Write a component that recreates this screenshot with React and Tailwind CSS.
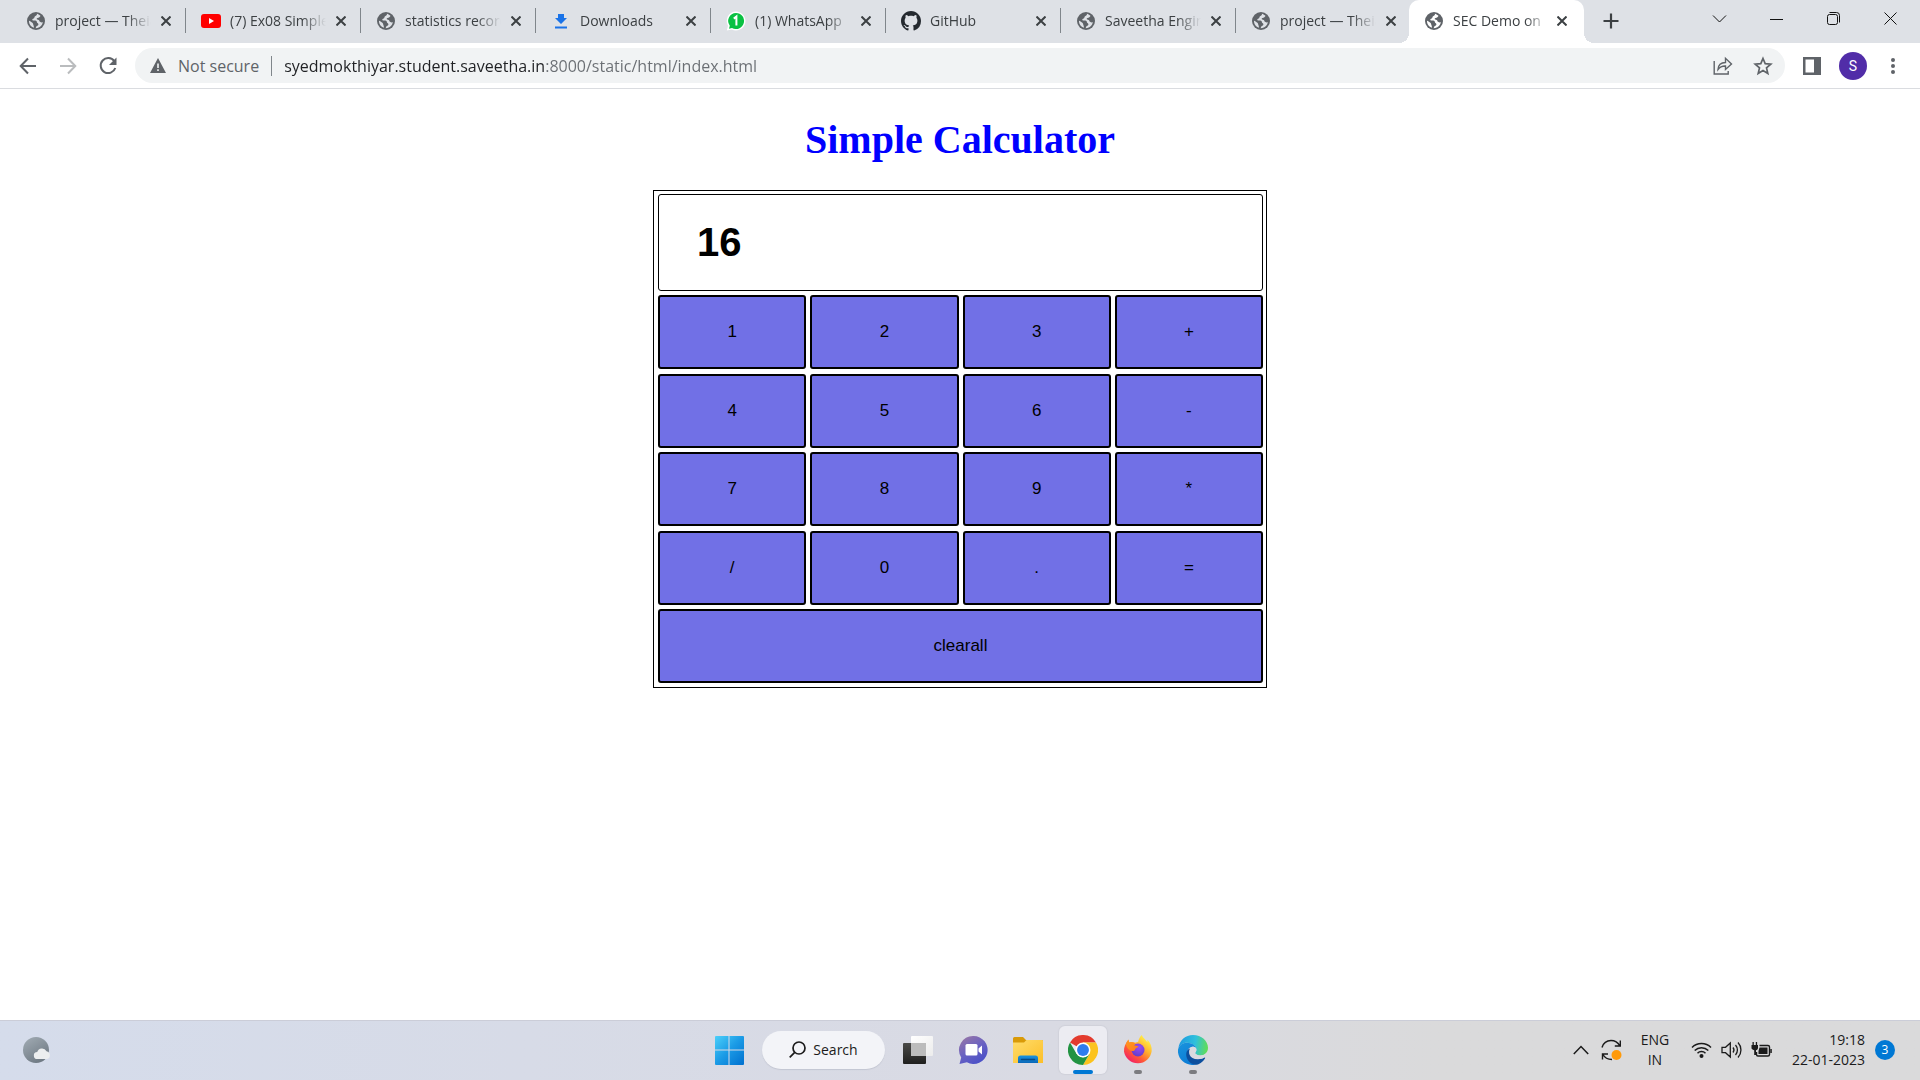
import { useState } from "react";

const Globe = ({ active }) => (
  <svg width="18" height="18" viewBox="0 0 18 18" className="shrink-0" aria-hidden="true">
    <circle cx="9" cy="9" r="9" fill="#5f6368" />
    <g fill={active ? "#fff" : "#dee1e6"}>
      <path d="M9.8 1.8c.6 1-.3 1.800-1.300 2.300-.9.4-.9 1.200-1.300 1.900-.5.9-2 .7-2 1.700 0 1 1.700.8 3 .9 1.500.1 1.600 1.200 1.800 2 .3.8 1.500.7 1.400 1.900-.1 1.200-1.700 1.200-2.200 2.200-.2.500-.4 1-.6 1.500l1.700-.1c3-.7 5-2.900 5.600-5.800-.9.200-2 .2-2.900-.500-.8-.6-.4-1.500-1.300-1.900-.9-.3-2-.1-2-1.100 0-1.200 1.600-1 2.400-1.400.7-.3.9-1 1.500-1.400C12.700 3 11.300 2.200 9.800 1.800Z" />
      <path d="M2 8.800c1.300.2 1.900 1.200 3 1.700 1 .5 1.100 1.400 1.300 2.300.2.900.7 1.300.6 2.900C4 14.800 1.900 12.200 2 8.800Z" />
    </g>
  </svg>
);

const YouTube = () => (
  <svg width="20" height="20" viewBox="0 0 20 20" className="shrink-0" aria-hidden="true">
    <rect y="3" width="20" height="14" rx="3" fill="#f00" />
    <path d="M8 7v6l5-3z" fill="#fff" />
  </svg>
);

const Download = () => (
  <svg width="20" height="20" viewBox="0 0 20 20" className="shrink-0" aria-hidden="true">
    <path d="M7 3h6v4h3l-6 6-6-6h3zM4 15.500h12v2H4z" fill="#1a73e8" />
  </svg>
);

const WhatsApp = () => (
  <svg width="20" height="20" viewBox="0 0 20 20" className="shrink-0" aria-hidden="true">
    <path d="M10 .5a9.500 9.500 0 1 1-4.300 18L.8 19.600l1.200-4.800A9.500 9.500 0 0 1 10 .5Z" fill="#fff" />
    <path d="M10 2a8 8 0 1 1-4 14.900l-3 .800.800-2.900A8 8 0 0 1 10 2Z" fill="#0ac143" />
    <path d="M7.800 7.600 10.400 5.600v9" fill="none" stroke="#fff" strokeWidth="2" />
  </svg>
);

const GitHub = () => (
  <svg width="20" height="20" viewBox="0 0 16 16" className="shrink-0" aria-hidden="true">
    <path
      fill="#24292f"
      d="M8 0C3.580 0 0 3.580 0 8c0 3.540 2.290 6.530 5.470 7.590.4.070.55-.17.55-.38 0-.19-.01-.82-.01-1.490-2.010.37-2.530-.49-2.690-.94-.09-.23-.48-.94-.82-1.130-.28-.15-.68-.52-.01-.53.63-.01 1.080.58 1.230.82.72 1.210 1.870.87 2.330.66.07-.52.28-.87.51-1.070-1.780-.2-3.640-.89-3.640-3.950 0-.87.31-1.590.82-2.150-.08-.2-.36-1.020.08-2.120 0 0 .67-.21 2.200.82.64-.18 1.320-.27 2-.27s1.360.09 2 .27c1.530-1.040 2.200-.82 2.200-.82.44 1.100.16 1.920.08 2.120.51.56.82 1.270.82 2.150 0 3.070-1.870 3.750-3.650 3.950.29.25.54.73.54 1.480 0 1.070-.01 1.930-.01 2.200 0 .21.15.46.55.38A8.010 8.010 0 0 0 16 8c0-4.420-3.580-8-8-8Z"
    />
  </svg>
);

const TABS = [
  { title: "project — Theia", icon: Globe },
  { title: "(7) Ex08 Simple Calculator", icon: YouTube },
  { title: "statistics record", icon: Globe },
  { title: "Downloads", icon: Download },
  { title: "(1) WhatsApp", icon: WhatsApp },
  { title: "GitHub", icon: GitHub },
  { title: "Saveetha Engineering", icon: Globe },
  { title: "project — Theia", icon: Globe },
  { title: "SEC Demo on", icon: Globe, active: true },
];

function Tab({ title, icon: Icon, active, first }) {
  return (
    <div
      className={
        active
          ? "relative -ml-px flex h-full w-[175px] items-center rounded-t-[10px] bg-white pr-3 pb-0.5 pl-[15px]"
          : "flex h-full w-[175px] items-center pr-[9px] pb-0.5 pl-4"
      }
    >
      {active && (
        <>
          <span className="absolute bottom-0 -left-2.5 size-2.5 bg-[radial-gradient(circle_at_0_0,transparent_10px,white_10px)]" />
          <span className="absolute -right-2.5 bottom-0 size-2.5 bg-[radial-gradient(circle_at_100%_0,transparent_10px,white_10px)]" />
        </>
      )}
      {!active && !first && <span className="-ml-4 mr-[15px] h-[25px] w-px shrink-0 bg-[#80868b]" />}
      <button type="button" className="flex min-w-0 flex-1 items-center overflow-hidden text-left">
        <span className="flex w-5 shrink-0 justify-center">
          <Icon active={active} />
        </span>
        <span className="ml-[9px] w-24 overflow-hidden whitespace-nowrap mask-r-from-75% text-sm text-[#3c4043]">
          {title}
        </span>
      </button>
      <button type="button" aria-label={`Close ${title}`} className="flex size-5 shrink-0 items-center justify-center">
        <svg width="10" height="10" viewBox="0 0 10 10">
          <path d="m.5.5 9 9m0-9-9 9" stroke="#3c4043" strokeWidth="2" />
        </svg>
      </button>
    </div>
  );
}

function WindowButton({ label, children }) {
  return (
    <button type="button" aria-label={label} className="flex h-9 w-[57px] items-center justify-center">
      <svg width="15" height="15" viewBox="0 0 15 15" fill="none" stroke="#111" strokeWidth="1">
        {children}
      </svg>
    </button>
  );
}

function TabStrip() {
  return (
    <div className="flex h-[43px] bg-[#dee1e6] pr-px pl-2.5">
      {TABS.map((t, i) => (
        <Tab key={i} {...t} first={i === 0} />
      ))}
      <button type="button" aria-label="New tab" className="ml-[15px] flex w-6 items-center justify-center pb-0.5">
        <svg width="16" height="16" viewBox="0 0 16 16">
          <path d="M8 .5v15M.5 8h15" stroke="#3c4043" strokeWidth="2.200" />
        </svg>
      </button>
      <div className="ml-auto flex">
        <WindowButton label="Search tabs">
          <path d="m1 4.500 6.500 6.500L14 4.500" />
        </WindowButton>
        <WindowButton label="Minimize">
          <path d="M1 8.500h13" />
        </WindowButton>
        <WindowButton label="Restore">
          <rect x="1.500" y="3.500" width="10" height="10" rx="2" />
          <path d="M3.500 1.500h7a3 3 0 0 1 3 3v7" />
        </WindowButton>
        <WindowButton label="Close window">
          <path d="m1.500 1.500 12 12m0-12-12 12" />
        </WindowButton>
      </div>
    </div>
  );
}

function Toolbar() {
  return (
    <div className="flex h-[46px] items-center border-b border-[#dadce0] bg-white pr-[17px] pl-4">
      <button type="button" aria-label="Back" className="flex w-6 justify-center">
        <svg width="20" height="20" viewBox="0 0 20 20" fill="none" stroke="#5f6368" strokeWidth="2">
          <path d="M18 10H3.500M10 2.500 2.700 10l7.300 7.500" />
        </svg>
      </button>
      <button type="button" aria-label="Forward" className="ml-4 flex w-6 justify-center">
        <svg width="20" height="20" viewBox="0 0 20 20" fill="none" stroke="#babcbe" strokeWidth="2">
          <path d="M2 10h14.500M10 2.500l7.300 7.500-7.300 7.500" />
        </svg>
      </button>
      <button type="button" aria-label="Reload" className="ml-4 flex w-6 justify-center">
        <svg width="20" height="20" viewBox="0 0 20 20">
          <path d="M16.300 5.200A7.500 7.500 0 1 0 17.300 12" fill="none" stroke="#5f6368" strokeWidth="2" />
          <path d="M18.500 1.500V9H11z" fill="#5f6368" />
        </svg>
      </button>
      <div className="ml-[15px] flex h-[35px] flex-1 items-center rounded-full bg-[#f1f3f4] pr-3 pl-[15px]">
        <button type="button" className="flex items-center text-base text-[#5f6368]">
          <svg width="16" height="15" viewBox="0 0 16 15" className="mr-3" aria-hidden="true">
            <path d="M8 0l8 15H0z" fill="#5f6368" />
            <path d="M7.200 5.500h1.600v4.500H7.200zM7.200 11.300h1.600v1.700H7.200z" fill="#f1f3f4" />
          </svg>
          Not secure
        </button>
        <span className="mx-3 h-5 w-px bg-[#80868b]" />
        <input
          type="text"
          aria-label="Address"
          defaultValue="syedmokthiyar.student.saveetha.in:8000/static/html/index.html"
          className="h-full min-w-0 flex-1 bg-[linear-gradient(90deg,#202124_261px,#6a6e73_261px)] bg-clip-text text-base text-transparent outline-none"
        />
        <button type="button" aria-label="Share this page">
          <svg width="20" height="20" viewBox="0 0 20 20" fill="none" stroke="#5f6368" strokeWidth="1.400">
            <path d="M1.200 5v13h14v-3M5 13.500c.3-5 3-7 7.500-7V2.300L18.500 8l-6 5.500V10c-3.500-.2-5.500.8-7.500 3.500Z" />
          </svg>
        </button>
        <button type="button" aria-label="Bookmark this tab" className="ml-5">
          <svg width="20" height="20" viewBox="0 0 20 20" fill="none" stroke="#5f6368" strokeWidth="1.700">
            <path d="m10 2.500 2.200 5.200 5.600.5-4.300 3.700 1.300 5.500-4.800-2.900-4.800 2.900 1.300-5.500L2.200 8.200l5.600-.5z" />
          </svg>
        </button>
      </div>
      <button type="button" aria-label="Side panel" className="ml-[18px]">
        <svg width="18" height="18" viewBox="0 0 18 18">
          <path d="M0 0h18v18H0zM2.500 2.500v13H11v-13z" fill="#5f6368" fillRule="evenodd" />
        </svg>
      </button>
      <button
        type="button"
        aria-label="Profile"
        className="ml-[18px] flex size-7 items-center justify-center rounded-full bg-[#512da8] font-['Roboto',sans-serif] text-sm text-white"
      >
        S
      </button>
      <button type="button" aria-label="Menu" className="ml-4 flex w-5 justify-center">
        <svg width="4" height="16" viewBox="0 0 4 16" fill="#5f6368">
          <circle cx="2" cy="2" r="2" />
          <circle cx="2" cy="8" r="2" />
          <circle cx="2" cy="14" r="2" />
        </svg>
      </button>
    </div>
  );
}

const KEYS = ["1", "2", "3", "+", "4", "5", "6", "-", "7", "8", "9", "*", "/", "0", ".", "="];

function Key({ label, wide, onPress }) {
  return (
    <button
      type="button"
      onClick={() => onPress(label)}
      className={
        wide
          ? "col-span-4 h-[74px] rounded-[3px] border-2 border-black bg-[#7170e6] text-[17px] text-black"
          : "h-[74px] rounded-[3px] border-2 border-black bg-[#7170e6] text-[17px] text-black"
      }
    >
      {label}
    </button>
  );
}

function Calculator() {
  const [value, setValue] = useState("16");

  const press = (key) => {
    if (key === "clearall") return setValue("");
    if (key !== "=") return setValue(value + key);
    try {
      setValue(String(Function(`return (${value || 0})`)()));
    } catch {
      setValue("Error");
    }
  };

  return (
    <main className="flex flex-1 flex-col items-center bg-white pt-7">
      <h1 className="font-['Liberation_Serif',serif] text-[40px] leading-[46px] font-bold text-[#00f]">
        Simple Calculator
      </h1>
      <div className="mt-[27px] grid w-[614px] max-w-full grid-cols-4 grid-rows-[auto_75px_74px_75px_74px] gap-1 border border-black pt-[3px] pr-[3px] pb-1 pl-1 font-['Liberation_Sans',sans-serif]">
        <input
          type="text"
          aria-label="Result"
          value={value}
          onChange={(e) => setValue(e.target.value)}
          className="col-span-4 h-[97px] rounded-[3px] border border-black px-[38px] text-[40px] font-bold text-black outline-none"
        />
        {KEYS.map((k) => (
          <Key key={k} label={k} onPress={press} />
        ))}
        <Key label="clearall" wide onPress={press} />
      </div>
    </main>
  );
}

const WindowsLogo = () => (
  <svg width="30" height="30" viewBox="0 0 30 30" aria-hidden="true">
    <defs>
      <linearGradient id="win" x1="0" y1="0" x2="30" y2="30" gradientUnits="userSpaceOnUse">
        <stop offset="0" stopColor="#4fd3fb" />
        <stop offset=".5" stopColor="#1b9be6" />
        <stop offset="1" stopColor="#0070cf" />
      </linearGradient>
    </defs>
    <path d="M2 1h12.500v13.500H1V2a1 1 0 0 1 1-1ZM15.500 1H29a1 1 0 0 1 1 1v12.500H15.500zM1 15.500h13.500V30H2a1 1 0 0 1-1-1zM15.500 15.500H30V29a1 1 0 0 1-1 1H15.500z" fill="url(#win)" />
  </svg>
);

const TaskView = () => (
  <svg width="30" height="30" viewBox="0 0 30 30" aria-hidden="true">
    <defs>
      <linearGradient id="tvDark" x1="0" y1="0" x2="0" y2="1">
        <stop offset="0" stopColor="#4a4a48" />
        <stop offset="1" stopColor="#1f1f1e" />
      </linearGradient>
      <linearGradient id="tvLight" x1="0" y1="0" x2="1" y2="1">
        <stop offset="0" stopColor="#fff" />
        <stop offset="1" stopColor="#ececec" />
      </linearGradient>
    </defs>
    <rect x="0" y="8" width="23" height="21" rx="1" fill="url(#tvDark)" />
    <rect x="8" y="1" width="22" height="20" rx="1" fill="url(#tvLight)" />
    <path d="M8 8h15v13H8z" fill="#bcbcbc" />
  </svg>
);

const Chat = () => (
  <svg width="30" height="30" viewBox="0 0 30 30" aria-hidden="true">
    <defs>
      <linearGradient id="chat" x1="4" y1="3" x2="20" y2="29" gradientUnits="userSpaceOnUse">
        <stop offset="0" stopColor="#9575a8" />
        <stop offset=".5" stopColor="#6a62c2" />
        <stop offset="1" stopColor="#4a50c8" />
      </linearGradient>
    </defs>
    <path d="M15.500 1a14 14 0 1 1-6.600 26.300L1.500 29l1.700-6.600A14 14 0 0 1 15.500 1Z" fill="url(#chat)" />
    <rect x="7.500" y="9" width="12" height="11.500" rx="1.500" fill="#fff" />
    <path d="m20.500 13.500 3.500-3v9l-3.500-3z" fill="#fff" />
  </svg>
);

const Explorer = () => (
  <svg width="30" height="30" viewBox="0 0 30 30" aria-hidden="true">
    <defs>
      <linearGradient id="folder" x1="0" y1="0" x2="1" y2="1">
        <stop offset="0" stopColor="#ffdc6b" />
        <stop offset="1" stopColor="#fcbf28" />
      </linearGradient>
      <linearGradient id="folderBlue" x1="0" y1="0" x2="0" y2="1">
        <stop offset="0" stopColor="#1a93e0" />
        <stop offset="1" stopColor="#0a68b8" />
      </linearGradient>
    </defs>
    <path d="M0 3.500A1.500 1.500 0 0 1 1.500 2H10l3 3h16a1 1 0 0 1 1 1v4H0z" fill="#d99a08" />
    <path d="M0 7.500h11L13.500 5H29a1 1 0 0 1 1 1v22H0z" fill="url(#folder)" />
    <path d="M5 28v-5a2.500 2.500 0 0 1 2.500-2.500h15A2.500 2.500 0 0 1 25 23v5z" fill="url(#folderBlue)" />
    <path d="M8.500 24.500h13" stroke="#074a85" strokeWidth="1.500" strokeLinecap="round" />
  </svg>
);

const ChromeLogo = () => (
  <svg width="30" height="30" viewBox="0 0 48 48" aria-hidden="true">
    <path d="M24 24 3.200 12A24 24 0 0 1 44.800 12H24z" fill="#e33b2e" />
    <path d="M24 12h20.800A24 24 0 0 1 24 48l10.400-18z" fill="#fcc31e" />
    <path d="M3.200 12 13.600 30 24 36l10.400-6L24 48A24 24 0 0 1 3.200 12Z" fill="#229342" />
    <circle cx="24" cy="24" r="12" fill="#fff" />
    <circle cx="24" cy="24" r="9.500" fill="#2f7cee" />
  </svg>
);

const FirefoxLogo = () => (
  <svg width="30" height="30" viewBox="0 0 30 30" aria-hidden="true">
    <defs>
      <linearGradient id="ffBody" x1="25" y1="4" x2="6" y2="28" gradientUnits="userSpaceOnUse">
        <stop offset="0" stopColor="#fff24a" />
        <stop offset=".35" stopColor="#ffb02e" />
        <stop offset=".65" stopColor="#ff5a36" />
        <stop offset="1" stopColor="#f0156f" />
      </linearGradient>
      <radialGradient id="ffCore" cx=".6" cy=".3" r=".8">
        <stop offset="0" stopColor="#9a4bf5" />
        <stop offset="1" stopColor="#5b3cc4" />
      </radialGradient>
      <linearGradient id="ffHead" x1="0" y1="0" x2="1" y2="1">
        <stop offset="0" stopColor="#ff9a1f" />
        <stop offset="1" stopColor="#ff7a1f" />
      </linearGradient>
    </defs>
    <path d="M18.800 0c1 2.800 3.600 4.300 5.500 7.200l.2-2.400C27.600 8 29 12 28.700 16A14 14 0 0 1 1 16.500C.8 12 2.500 8 5.500 4.500c0 1.400.2 2.200.8 3 1.800-.6 3.700-.7 5.700.2l3.200-.900C15.600 4 17 1.600 18.800 0Z" fill="url(#ffBody)" />
    <circle cx="15" cy="15" r="6.500" fill="url(#ffCore)" />
    <path d="M3 9.500C3.600 7.600 4.300 6 5.500 4.500c.1 1.400.4 2.300 1 3 1.700-.5 3.700-.4 5.600.5-.6.7-1 1.500-1 2.300l4.200.9c.2 1.300-2.800 1.700-3.300 3.200-.4 1.500-1.700 1.800-3.200 1.500C6 15.600 4 13 3 9.500Z" fill="url(#ffHead)" />
  </svg>
);

const EdgeLogo = () => (
  <svg width="30" height="30" viewBox="0 0 30 30" aria-hidden="true">
    <defs>
      <linearGradient id="edgeTop" x1="2" y1="8" x2="29" y2="12" gradientUnits="userSpaceOnUse">
        <stop offset="0" stopColor="#1f9de0" />
        <stop offset=".55" stopColor="#2fc0dc" />
        <stop offset="1" stopColor="#5fdc5a" />
      </linearGradient>
      <linearGradient id="edgeLeft" x1="4" y1="10" x2="16" y2="30" gradientUnits="userSpaceOnUse">
        <stop offset="0" stopColor="#1790dc" />
        <stop offset="1" stopColor="#0a78d4" />
      </linearGradient>
    </defs>
    <path d="M.3 13.500C1.500 5 7.600 0 15 0c8.500 0 15 6 15 12.800 0 4.600-3.600 7.700-7.600 7.700-3.400 0-5.300-1.300-5.300-2.400 0-.7 1.300-1.300 1.300-3.400 0-3.400-4.200-7-9.500-7C5 7.700 1.500 10.200.3 13.500Z" fill="url(#edgeTop)" />
    <path d="M.2 14C1 10.500 4.600 7.800 9 7.800c5.100 0 8.600 3 9.200 5.500-1-1-2.200-1.500-3.600-1.500-3 0-5.600 3-5.600 7 0 5 4 9.700 9 10.800C9 31.800-.6 25-.1 15z" fill="url(#edgeLeft)" />
    <path d="M12 13.500c-2 3.500-1.300 10.500 8 10.800 3 0 4.800-.8 6.300-1.700.6-.3 1.100.2.7.8C24.800 27 21 29.800 17.200 29.800 12 29 8 24.300 8.200 19c.1-2.500 1.500-4.700 3.800-5.500Z" fill="#0d4f9e" />
    <path d="M13.500 12c-2.300 2-2.500 6.500 1 9.500 1.500 1.300 3.300 2 5.500 2.300 3 .1 5-.7 6.300-1.400l1.500-3.600c-1.600 1.100-3.300 1.700-5.400 1.700-3.400 0-5.300-1.300-5.300-2.400 0-.7 1.300-1.300 1.300-3.400 0-.5-.100-1-.3-1.500-1.100-1.200-3-1.700-4.600-1.200Z" fill="#d9dae0" />
  </svg>
);

const APPS = [
  { name: "Task View", icon: TaskView },
  { name: "Chat", icon: Chat },
  { name: "File Explorer", icon: Explorer },
  { name: "Google Chrome", icon: ChromeLogo, current: true },
  { name: "Firefox", icon: FirefoxLogo, running: true },
  { name: "Microsoft Edge", icon: EdgeLogo, running: true },
];

function Taskbar() {
  return (
    <footer className="grid h-[60px] grid-cols-[1fr_auto_1fr] items-center border-t border-[#cbcdd8] bg-linear-to-r from-[#d5dceb] via-[#d9dae3] via-55% to-[#dadadb] to-75% pb-0.5 text-sm text-[#1b1b1b]">
      <button type="button" aria-label="Weather" className="ml-[22px] justify-self-start">
        <svg width="30" height="28" viewBox="0 0 30 28">
          <defs>
            <linearGradient id="moon" x1="0" y1="0" x2=".6" y2="1">
              <stop offset="0" stopColor="#a3adb5" />
              <stop offset="1" stopColor="#6f7a84" />
            </linearGradient>
          </defs>
          <circle cx="14" cy="14" r="13" fill="url(#moon)" />
          <path d="M15.500 23a3.500 3.500 0 0 1-.3-7 5 5 0 0 1 9.300-.8A4 4 0 0 1 25 23z" fill="#eceeef" />
        </svg>
      </button>
      <div className="flex items-center pl-0.5">
        <button type="button" aria-label="Start" className="flex size-12 items-center justify-center">
          <WindowsLogo />
        </button>
        <button
          type="button"
          className="mx-[9px] flex h-[38px] w-[123px] items-center justify-center gap-[7px] rounded-full bg-[#f3f4f8] shadow-[0_1px_1px_#c3c6d2]"
        >
          <svg width="17" height="17" viewBox="0 0 17 17" fill="none" stroke="#1b1b1b" strokeWidth="1.700" aria-hidden="true">
            <circle cx="10" cy="7" r="6" />
            <path d="M5.700 11.300.7 16.300" />
          </svg>
          Search
        </button>
        <div className="flex gap-[7px]">
          {APPS.map(({ name, icon: Icon, current, running }) => (
            <button
              key={name}
              type="button"
              aria-label={name}
              className={
                current
                  ? "relative flex size-12 items-center justify-center rounded-md bg-[#ececf2] shadow-[0_0_1px_1px_#d0d1da]"
                  : "relative flex size-12 items-center justify-center"
              }
            >
              <Icon />
              {current && <span className="absolute bottom-0 h-1 w-5 rounded-full bg-[#0078d4]" />}
              {running && <span className="absolute bottom-0 h-1 w-2 rounded-full bg-[#7c7c80]" />}
            </button>
          ))}
        </div>
      </div>
      <div className="flex items-center justify-self-end pr-[25px]">
        <button type="button" aria-label="Show hidden icons">
          <svg width="16" height="10" viewBox="0 0 16 10" fill="none" stroke="#1b1b1b" strokeWidth="1.500">
            <path d="m.8 9 7.200-7.500L15.200 9" />
          </svg>
        </button>
        <button type="button" aria-label="Windows Update" className="ml-3">
          <svg width="21" height="22" viewBox="0 0 21 22" fill="none" stroke="#1b1b1b" strokeWidth="1.400">
            <path d="M1 8.500C2.500 3.500 6 1.500 10 1.500c3.500 0 7 2 9 5.500M19.300 1.500V7h-5.500M1.500 20.500V15H7M2 15.500c1.500 3 5 5 9 5" />
            <circle cx="15.500" cy="16" r="5" fill="#ff9a0a" stroke="none" />
          </svg>
        </button>
        <button type="button" aria-label="Input language" className="ml-[17px] w-8 text-center leading-5">
          ENG
          <br />
          IN
        </button>
        <button type="button" aria-label="Network, volume and battery" className="ml-5 flex items-center gap-[9px]">
          <svg width="21" height="20" viewBox="0 0 21 20" fill="none" stroke="#1b1b1b" strokeWidth="1.500">
            <path d="M1 7.500a13.500 13.500 0 0 1 19 0M3.700 10.500a9.600 9.600 0 0 1 13.600 0M6.500 13.300a5.600 5.600 0 0 1 8 0" />
            <circle cx="10.500" cy="16" r="2" fill="#1b1b1b" stroke="none" />
          </svg>
          <svg width="21" height="20" viewBox="0 0 21 20" fill="none" stroke="#1b1b1b" strokeWidth="1.300">
            <path d="M1 7.300h3.500L9.300 3v14l-4.800-4.300H1zM12 7.500a4 4 0 0 1 0 5M14.500 5a7.500 7.500 0 0 1 0 10M17 2.500a11 11 0 0 1 0 15" />
          </svg>
          <svg width="21" height="20" viewBox="0 0 21 20" fill="#1b1b1b">
            <path d="M1.500 2h1.300v3h2V2h1.300v3H7v3c0 1.300-.9 2-2 2.200V15H3.200v-4.800C1.500 9.800.5 9 .5 8V5h1z" />
            <path d="M8.500 5.500H17a1.500 1.500 0 0 1 1.500 1.500v7.500A1.500 1.500 0 0 1 17 16H7a1.500 1.500 0 0 1-1.500-1.500V12" fill="none" stroke="#1b1b1b" strokeWidth="1.400" />
            <path d="M8.500 7.500h8v6.500h-9v-3zM19.300 9h1.500v4h-1.500z" />
          </svg>
        </button>
        <button type="button" className="ml-5 flex items-center gap-2.5 text-right leading-5">
          <span>
            19:18
            <br />
            22-01-2023
          </span>
          <span className="flex size-5 items-center justify-center rounded-full bg-[#0078d4] text-xs text-white">3</span>
        </button>
      </div>
    </footer>
  );
}

export default function App() {
  return (
    <div className="flex min-h-screen flex-col bg-white font-['Open_Sans','Noto_Sans',sans-serif]">
      <header>
        <TabStrip />
        <Toolbar />
      </header>
      <Calculator />
      <Taskbar />
    </div>
  );
}
